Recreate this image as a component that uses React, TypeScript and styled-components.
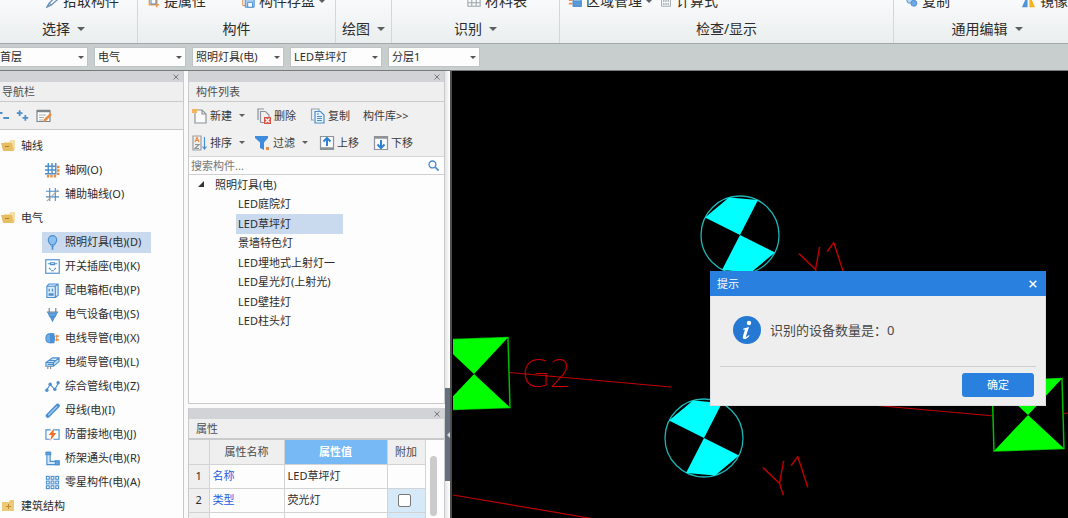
import React from "react";
import styled, { createGlobalStyle, css } from "styled-components";

const GlobalStyle = createGlobalStyle`
  * { box-sizing: border-box; }
  body {
    margin: 0;
    font-family: "Noto Sans", "Noto Sans CJK SC", sans-serif;
    font-size: 11px;
    line-height: 16px;
    color: #2c2c2c;
    background: #c8cccd;
  }
  button, select, input { font: inherit; color: inherit; }
  button { border: 0; padding: 0; background: none; cursor: pointer; }
  ul { list-style: none; margin: 0; padding: 0; }
  h2 { margin: 0; font: inherit; }
  svg { display: block; flex: none; }
`;

const Page = styled.div`
  display: flex;
  flex-direction: column;
  height: 100vh;
  overflow: hidden;
`;

/* ---------- ribbon ---------- */

const Ribbon = styled.header`
  display: flex;
  height: 43px;
  margin-left: -10px;
  flex: none;
  overflow: hidden;
  background: linear-gradient(#f9fafb, #eaeeee);
`;

const RibbonGroup = styled.section<{ $width: number }>`
  display: flex;
  flex-direction: column;
  justify-content: flex-end;
  flex: none;
  width: ${(p) => p.$width}px;
  padding-bottom: 4px;
  font-size: 14px;
  line-height: 20px;
  white-space: nowrap;
  border-right: 1px solid #d3d7d8;
`;

const ToolRow = styled.div<{ $inset: number; $gap?: number }>`
  display: flex;
  gap: ${(p) => p.$gap ?? 0}px;
  padding-left: ${(p) => p.$inset}px;
  margin-bottom: 8px;
`;

const RibbonTool = styled.button`
  display: flex;
  align-items: center;
  gap: 4px;
  height: 20px;
`;

const GroupLabel = styled.div`
  display: flex;
  align-items: center;
  justify-content: center;
  gap: 7px;
`;

const Caret = styled.span<{ $small?: boolean }>`
  flex: none;
  width: 0;
  height: 0;
  border: solid transparent;
  border-width: ${(p) => (p.$small ? "3px 3px 0" : "4px 4px 0")};
  border-top-color: #5c5f61;
`;

/* ---------- context bar ---------- */

const ContextBar = styled.div`
  display: flex;
  align-items: center;
  gap: 6px;
  height: 28px;
  margin-left: -4px;
  flex: none;
  background: #c8cdce;
  border-top: 1px solid #a3a9a9;
  border-bottom: 1px solid #77797b;
`;

const Picker = styled.label`
  position: relative;
  width: 92px;
  height: 20px;

  &::after {
    content: "";
    position: absolute;
    right: 4px;
    top: 9px;
    border: solid transparent;
    border-width: 3px 3px 0;
    border-top-color: #555;
    pointer-events: none;
  }
`;

const PickerSelect = styled.select`
  appearance: none;
  display: block;
  width: 100%;
  height: 100%;
  padding: 0 0 0 3px;
  border: 1px solid #bfc3c5;
  border-radius: 0;
  background: #fdfdfd;
`;

/* ---------- dock panels ---------- */

const Workspace = styled.div`
  display: flex;
  flex: 1;
  min-height: 0;
  background: #fafafa;
`;

const Dock = styled.aside<{ $width: number; $gutter?: number }>`
  display: flex;
  flex-direction: column;
  flex: none;
  width: ${(p) => p.$width}px;
  margin-right: ${(p) => p.$gutter ?? 0}px;
`;

const DockGap = styled.div`
  flex: none;
  height: 4px;
`;

const Panel = styled.section<{ $fill?: boolean; $edge?: boolean }>`
  display: flex;
  flex-direction: column;
  min-height: 0;
  flex: ${(p) => (p.$fill ? "1" : "0 0 110px")};
  background: #fdfdfd;
  border: solid #c9cacc;
  border-width: ${(p) => (p.$edge ? "0 1px 0 0" : p.$fill ? "0 1px 1px" : "0 1px")};
`;

const PanelGrip = styled.div`
  display: flex;
  justify-content: flex-end;
  align-items: center;
  height: 11px;
  padding-right: 4px;
  flex: none;
  background: #d2d3d7;
`;

const GripClose = styled.button`
  color: #77797d;
`;

const PanelTitle = styled.h2<{ $inset: number }>`
  flex: none;
  height: 20px;
  padding-left: ${(p) => p.$inset}px;
  line-height: 19px;
  color: #4d4d4d;
  background: #efeff0;
  border-bottom: 1px solid #c9cacc;
`;

const NavTools = styled.div`
  display: flex;
  align-items: center;
  gap: 7px;
  height: 28px;
  flex: none;
  padding-right: 4px;
  background: #f0f0f0;
  border-bottom: 1px solid #c9cacc;

  button:first-child { margin-left: -4px; }
`;

const NavTree = styled.ul`
  padding-top: 4px;
`;

const NavGroup = styled.li`
  display: flex;
  align-items: center;
  gap: 5px;
  height: 24px;
  padding-left: 1px;
`;

const NavItem = styled.li`
  display: flex;
  align-items: center;
  height: 24px;
  padding-left: 42px;
`;

const NavButton = styled.button<{ $active?: boolean }>`
  display: flex;
  align-items: center;
  gap: 5px;
  height: 21px;
  padding: 0 10px 0 3px;
  white-space: nowrap;
  background: ${(p) => (p.$active ? "#c9d9ee" : "transparent")};
`;

/* ---------- component list ---------- */

const ListTools = styled.div`
  flex: none;
  background: #f0f0f0;
  border-bottom: 1px solid #d5d6d8;
`;

const ListToolRow = styled.div`
  display: flex;
  align-items: center;
  height: 27px;
  padding-left: 3px;
`;

const ListTool = styled.button<{ $width: number }>`
  display: flex;
  align-items: center;
  gap: 2px;
  width: ${(p) => p.$width}px;
  white-space: nowrap;
  color: #3a3a3a;

  ${Caret} { margin-left: 5px; }
`;

const SearchBox = styled.label`
  display: flex;
  align-items: center;
  flex: none;
  height: 18px;
  padding: 0 5px 0 2px;
  border-bottom: 1px solid #cfd0d2;
`;

const SearchInput = styled.input`
  flex: 1;
  min-width: 0;
  height: 16px;
  padding: 0;
  border: 0;
  outline: 0;
  background: transparent;

  &::placeholder { color: #777; opacity: 1; }
`;

const ComponentTree = styled.ul`
  display: grid;
  grid-auto-rows: 1fr;
  min-height: 156px;
`;

const treeRow = css`
  display: flex;
  align-items: center;
  white-space: nowrap;
`;

const TreeRoot = styled.li`
  ${treeRow}
  gap: 10px;
  padding-left: 9px;
`;

const TreeItem = styled.li<{ $active?: boolean }>`
  ${treeRow}
  width: 107px;
  margin-left: 47px;
  padding-left: 2px;
  background: ${(p) => (p.$active ? "#c9d9ee" : "transparent")};
`;

/* ---------- properties ---------- */

const PropertyArea = styled.div`
  display: flex;
  flex: 1;
  min-height: 0;
  overflow: hidden;
  border-top: 1px solid #c9cacc;
`;

const PropertyTable = styled.table`
  width: 236px;
  flex: none;
  table-layout: fixed;
  border-collapse: collapse;
`;

const HeadCell = styled.th<{ $active?: boolean }>`
  height: 24px;
  padding: 0;
  font-weight: ${(p) => (p.$active ? 700 : 400)};
  color: ${(p) => (p.$active ? "#fff" : "#4a4a4a")};
  background: ${(p) => (p.$active ? "#76b9f5" : "#efeff0")};
  border: solid #d2d3d5;
  border-width: 0 1px 1px 0;
`;

const Cell = styled.td<{ $kind?: "index" | "name" | "flag" }>`
  height: 24px;
  padding: 0 0 0 3px;
  border: solid #d2d3d5;
  border-width: 0 1px 1px 0;
  ${(p) => p.$kind === "index" && css`padding: 0; text-align: center; background: #efeff0;`}
  ${(p) => p.$kind === "name" && css`color: #1f5be0;`}
  ${(p) => p.$kind === "flag" && css`padding: 0 3px 0 0; background: #d6e9f9;`}
`;

const Tick = styled.input`
  appearance: none;
  display: block;
  width: 13px;
  height: 13px;
  margin: 0 auto;
  border: 1px solid #777;
  border-radius: 2px;
  background: #fff;
`;

const ScrollTrack = styled.div`
  flex: 1;
  padding: 16px 0 0 4px;
`;

const ScrollThumb = styled.div`
  width: 7px;
  height: 60px;
  border-radius: 4px;
  background: #cbcbcd;
`;

const Splitter = styled.div`
  flex: none;
  width: 5px;
  padding-top: 317px;
  background: linear-gradient(90deg, #e4e4e6, #fff);
`;

const SplitterHandle = styled.button`
  display: flex;
  align-items: center;
  justify-content: flex-end;
  width: 5px;
  height: 93px;
  background: #64707c;

  &::after {
    content: "";
    border: solid transparent;
    border-width: 3px 3px 3px 0;
    border-right-color: #d8dde2;
  }
`;

/* ---------- drawing + dialog ---------- */

const DrawingArea = styled.main`
  position: relative;
  flex: 1;
  min-width: 0;
  padding-left: 1px;
  overflow: hidden;
  background: #000;
  border-left: 2px solid #4c4e50;
`;

const Dialog = styled.section`
  position: absolute;
  top: 200px;
  right: 22px;
  width: 336px;
  background: #efeeef;
  border: 1px solid #dcdde0;
  border-top: 0;
`;

const DialogHead = styled.div`
  display: flex;
  align-items: center;
  justify-content: space-between;
  height: 25px;
  margin: 0 -1px;
  padding: 0 9px 0 7px;
  color: #fff;
  background: #2a80de;
`;

const DialogBody = styled.div`
  display: flex;
  align-items: center;
  gap: 9px;
  height: 71px;
  margin: 0 9px;
  padding: 0 0 3px 13px;
  font-size: 13px;
  color: #484848;
  border-bottom: 1px solid #cfcfcf;
`;

const DialogFoot = styled.div`
  display: flex;
  justify-content: flex-end;
  padding: 6px 11px 8px;
`;

const ConfirmButton = styled.button`
  width: 72px;
  height: 24px;
  border-radius: 3px;
  color: #fff;
  background: #2a80de;
`;

/* ---------- icons ---------- */

const BLUE = "#4b8fcf";
const ORANGE = "#ee8b3e";

const Icon = ({ children, size = 16 }: { children: React.ReactNode; size?: number }) => (
  <svg width={size} height={size} viewBox="0 0 16 16" fill="none" stroke={BLUE} strokeWidth="1.2" aria-hidden="true">
    {children}
  </svg>
);

const Cross = ({ size = 6, weight = 1 }: { size?: number; weight?: number }) => (
  <svg width={size} height={size} viewBox="0 0 8 8" stroke="currentColor" strokeWidth={weight * (8 / size)}>
    <path d="M.7.7l6.600 6.600M7.300.7L.7 7.300" />
  </svg>
);

const FolderIcon = ({ closed }: { closed?: boolean }) => (
  <svg width="15" height="14" viewBox="0 0 15 14" aria-hidden="true">
    {closed ? (
      <>
        <path d="M1 3h7l1-2h4v11H1z" fill="#ecc877" />
        <path d="M5 7.5h5M7.5 5v5" stroke="#b98e35" />
      </>
    ) : (
      <>
        <path d="M3 3h5l1-2h5v9l-1 2H4z" fill="#f4dfa9" />
        <path d="M0 4h11l2 8H2z" fill="#e6bd62" />
        <path d="M4 7.5h4" stroke="#a98032" />
      </>
    )}
  </svg>
);

const navIcons: Record<string, React.ReactNode> = {
  grid: (
    <>
      <path d="M3.500 0v12M7.500 0v12M11.500 0v12M0 3.500h12M0 7.500h12M0 11.500h12" strokeWidth="1.500" />
      <path d="M14 3v10M2 14h11" stroke={ORANGE} strokeWidth="2.800" strokeDasharray="2.500 1.200" />
    </>
  ),
  aux: (
    <>
      <path d="M5 1v14M11 1v14M1 4.500h14M1 10.500h14" />
      <path d="M2 15L14 3" stroke="#b4a494" />
    </>
  ),
  bulb: (
    <>
      <path d="M6 10.500C5.500 9 3.500 8 3.500 5.200a4.500 4.500 0 019 0C12.500 8 10.500 9 10 10.500z" fill="#8dc0ee" />
      <path d="M6.500 12.500h3M7 15h2M8 11v4" />
    </>
  ),
  socket: (
    <>
      <rect x=".8" y=".8" width="14.4" height="14.4" />
      <path d="M3 5h3M10 5h3M6 4h4v2H6zM4.500 9.500l1.500 2M11.500 9.500l-1.500 2M6.500 12.500h3" />
    </>
  ),
  box: (
    <>
      <path d="M2 3.500h9v12H2zM2 3.500L4 1h10v12l-3 2.500M11 3.500L14 1" fill="#d9eafa" />
      <path d="M4.500 6v3M8 6v3M4.500 11.500h4v1.500h-4z" strokeWidth="1.4" />
    </>
  ),
  plug: (
    <>
      <path d="M4.500 1v4M11.500 1v4M2 5.500h12" stroke="#6e7f8e" />
      <path d="M3.500 6.500h9L11 10H5zM6 11h4l-2 4z" fill="#64a6e6" />
    </>
  ),
  conduit: (
    <>
      <rect x="1" y="3" width="9" height="9.5" rx="4" fill="#6dabea" />
      <path d="M6 3h3.500v9.500H6z" fill="#4a90dc" />
      <path d="M11 5.500h4M11 9.500h4M12.500 4v7" stroke={ORANGE} />
    </>
  ),
  cable: (
    <>
      <path d="M1 8l7-5h7v4l-6 5H1zM1 8h8l6-5M9 8v4M4 6h8M3 10h6" fill="#c5def5" />
      <path d="M3 12v3M6 12v3" stroke="#9b8a78" />
    </>
  ),
  polyline: (
    <>
      <path d="M1.500 12l4-6 5 5 4-7" />
      <g fill={BLUE} stroke="none">
        <circle cx="2" cy="12" r="1.8" />
        <circle cx="5.5" cy="5.5" r="1.8" />
        <circle cx="10.5" cy="11" r="1.8" />
        <circle cx="14" cy="4" r="1.8" />
      </g>
    </>
  ),
  bus: (
    <>
      <path d="M3 13.500L13.500 3" strokeWidth="4.5" strokeLinecap="round" />
      <path d="M3.500 13L13 3.500" stroke="#9ccaf2" strokeWidth="1.5" />
    </>
  ),
  bolt: (
    <>
      <path d="M6 3H1v10h4M10 3h5v10H9" />
      <path d="M10 1L4 8.500h3L5.500 15l6.500-8.500H9z" fill="#f0702a" stroke="none" />
    </>
  ),
  elbow: (
    <>
      <path d="M2 1.500h3.500V11H15v3.500H2z" fill="#d4e7f9" />
      <path d="M1 1.500h5V4H1zM11 10.500h4v4h-4z" fill="#62a4e4" />
    </>
  ),
  blocks: (
    <>
      {[1.5, 6.5, 11.5].map((y) => [1.5, 6.5, 11.5].map((x) => <rect key={`${x}-${y}`} x={x} y={y} width="3" height="3" />))}
    </>
  ),
};

const NewIcon = () => (
  <Icon>
    <path d="M4 2h6l4 4v9H3V5" fill="#fafafa" stroke="#8d9398" />
    <path d="M10 2v4h4" stroke="#8d9398" />
    <path d="M0 1h5v4H0z" fill="#f6b25d" stroke="none" />
  </Icon>
);
const DeleteIcon = () => (
  <Icon>
    <path d="M2 12V1h6M4.500 14.500v-11h5l3.500 3.500v3M4.500 14.500H8" stroke="#8d9398" />
    <rect x="8" y="9" width="7" height="7" fill="#dd5146" stroke="none" />
    <path d="M9.500 10.500l4 4M13.500 10.500l-4 4" stroke="#fff" />
  </Icon>
);
const CopyIcon = () => (
  <Icon>
    <path d="M4 12H1.500V1H9v2" stroke="#8fa4b5" />
    <path d="M5 3.500h5.500L14 7v8H5z" fill="#e6f1fb" />
    <path d="M7 8.500h5M7 10.500h5M7 12.500h5M7 6h2" />
  </Icon>
);
const SortIcon = () => (
  <Icon>
    <path d="M1 1h8v14H1z" stroke="#9a9fa3" />
    <path d="M3 7l2-4.500L7 7M3.500 5.500h3" stroke={ORANGE} />
    <path d="M3 9.500h4l-4 4h4" stroke="#8f9599" />
    <path d="M12.500 2v12M10.500 11.500l2 2.500 2-2.500" />
  </Icon>
);
const FilterIcon = () => (
  <Icon>
    <path d="M0 1h13v2L9 7.500V15l-4-2V7.500L0 3z" fill="#3f8bdc" stroke="none" />
    <path d="M11 12h3v3h-3z" fill={ORANGE} stroke="none" />
  </Icon>
);
const MoveIcon = ({ down }: { down?: boolean }) => (
  <Icon>
    <path d="M1.500 1.500h13v13h-13z" fill="#fafafa" stroke="#8d9398" />
    <path d={down ? "M1 2.500h14" : "M1 13.500h14"} stroke="#8d9398" strokeWidth="2.5" />
    <path d={down ? "M8 5v8M4.500 9.500L8 13l3.500-3.500" : "M8 11V3M4.500 6.500L8 3l3.500 3.500"} stroke="#2f7fd4" strokeWidth="2" />
  </Icon>
);

/* ---------- data ---------- */

const navGroups: { name: string; closed?: boolean; items: [string, string][] }[] = [
  { name: "轴线", items: [["轴网(O)", "grid"], ["辅助轴线(O)", "aux"]] },
  {
    name: "电气",
    items: [
      ["照明灯具(电)(D)", "bulb"],
      ["开关插座(电)(K)", "socket"],
      ["配电箱柜(电)(P)", "box"],
      ["电气设备(电)(S)", "plug"],
      ["电线导管(电)(X)", "conduit"],
      ["电缆导管(电)(L)", "cable"],
      ["综合管线(电)(Z)", "polyline"],
      ["母线(电)(I)", "bus"],
      ["防雷接地(电)(J)", "bolt"],
      ["桥架通头(电)(R)", "elbow"],
      ["零星构件(电)(A)", "blocks"],
    ],
  },
  { name: "建筑结构", closed: true, items: [] },
];

const components = ["LED庭院灯", "LED草坪灯", "景墙特色灯", "LED埋地式上射灯一", "LED星光灯(上射光)", "LED壁挂灯", "LED柱头灯"];

const pickers: [string, string][] = [
  ["楼层", "首层"],
  ["专业", "电气"],
  ["构件类型", "照明灯具(电)"],
  ["构件", "LED草坪灯"],
  ["分层", "分层1"],
];

/* ---------- drawing symbols ---------- */

const RoundLamp = ({ x, y }: { x: number; y: number }) => (
  <g transform={`translate(${x} ${y})`}>
    <circle r="39" fill="none" stroke="#1fb5b5" strokeWidth="1.3" />
    <path d="M0 0L-35-17.500-11-37.500 18-35zM0 0L35 17.500 11 37.500-18 35z" fill="#0ff" />
  </g>
);

const SquareLamp = ({ x, y }: { x: number; y: number }) => (
  <g transform={`translate(${x} ${y})`}>
    <path d="M-36-34L34-36.500 36 33.500-34 36z" fill="none" stroke="#0b0" strokeWidth="1.5" />
    <path d="M0 0L-36-34 34-36.500zM0 0L36 33.500-34 36z" fill="#0f0" />
  </g>
);

const CadText = styled.text`
  font-family: "Noto Sans", "Roboto", sans-serif;
  font-weight: 100;
  fill: #d00000;
`;

const Drawing = () => (
  <svg width="615" height="447" viewBox="453 71 615 447" role="img" aria-label="电气平面图">
    <path d="M509 372.500L671 387M860 404L994 416M1064 413.500L1068 413M453 495L592 518.500" stroke="#c00000" strokeWidth="1.2" />
    <SquareLamp x={474} y={374} />
    <SquareLamp x={1028} y={415} />
    <RoundLamp x={740} y={235} />
    <RoundLamp x={704} y={438} />
    <CadText x="522" y="387" fontSize="38">G2</CadText>
    <CadText fontSize="46" transform="translate(808 285) rotate(-18)">Y1</CadText>
    <CadText fontSize="46" transform="translate(772 499) rotate(-18)">Y1</CadText>
  </svg>
);

/* ---------- page ---------- */

const Grip = ({ label }: { label: string }) => (
  <PanelGrip><GripClose aria-label={label}><Cross /></GripClose></PanelGrip>
);

export default function App() {
  return (
    <Page>
      <GlobalStyle />
      <Ribbon>
        <RibbonGroup $width={148}>
          <ToolRow $inset={56}>
            <RibbonTool><Icon size={13}><path d="M1 15l3-5 8-8 3 3-8 7zM4 10l3 3" stroke="#6b8fb5" strokeWidth="1.6" /></Icon>拾取构件</RibbonTool>
          </ToolRow>
          <GroupLabel>选择<Caret /></GroupLabel>
        </RibbonGroup>
        <RibbonGroup $width={198}>
          <ToolRow $inset={9} $gap={36}>
            <RibbonTool><Icon size={13}><path d="M3 1v11h12M1 4h11v11" stroke="#e59b55" strokeWidth="2" /><path d="M5 5h6v6H5z" /></Icon>提属性</RibbonTool>
            <RibbonTool><Icon size={13}><path d="M1 1v12h3" stroke={ORANGE} /><path d="M4 1h11v14H4z" fill="#a9cdf0" /><path d="M7 9h6v6H7z" fill="#fff" /></Icon>构件存盘<Caret $small /></RibbonTool>
          </ToolRow>
          <GroupLabel>构件</GroupLabel>
        </RibbonGroup>
        <RibbonGroup $width={56}>
          <GroupLabel>绘图<Caret /></GroupLabel>
        </RibbonGroup>
        <RibbonGroup $width={168}>
          <ToolRow $inset={75}>
            <RibbonTool><Icon size={14}><path d="M1 2h14v12H1zM1 6h14M1 10h14M5.500 2v12M10.500 2v12" stroke="#9aa5ad" /></Icon>材料表</RibbonTool>
          </ToolRow>
          <GroupLabel>识别<Caret /></GroupLabel>
        </RibbonGroup>
        <RibbonGroup $width={334}>
          <ToolRow $inset={8} $gap={8}>
            <RibbonTool><Icon size={14}><path d="M1 3h4M1 7h4M1 11h4" stroke={ORANGE} strokeWidth="2" /><path d="M6 2h9v12H6z" fill="#cfe3f6" /><path d="M6 8h9v6H6z" fill="#5b9ad8" /></Icon>区域管理<Caret $small /></RibbonTool>
            <RibbonTool><Icon size={12}><path d="M2 1h12v14H2zM2 5h12" stroke="#9aa5ad" /><path d="M4 8h8M4 12h8" stroke="#9aa5ad" strokeWidth="2" strokeDasharray="2 1" /></Icon>计算式</RibbonTool>
          </ToolRow>
          <GroupLabel>检查/显示</GroupLabel>
        </RibbonGroup>
        <RibbonGroup $width={187}>
          <ToolRow $inset={12} $gap={71}>
            <RibbonTool><Icon size={12}><circle cx="5" cy="7" r="4" fill="#b9d4f0" /><circle cx="10.5" cy="11" r="4" fill="#6fa8e4" /></Icon>复制</RibbonTool>
            <RibbonTool><Icon size={15}><path d="M7 1v13H1z" fill="#4c94dc" stroke="none" /><path d="M9 1v13h6z" fill="#f5b11e" stroke="none" /></Icon>镜像</RibbonTool>
          </ToolRow>
          <GroupLabel>通用编辑<Caret /></GroupLabel>
        </RibbonGroup>
      </Ribbon>

      <ContextBar>
        {pickers.map(([label, value]) => (
          <Picker key={label}>
            <PickerSelect aria-label={label}><option>{value}</option></PickerSelect>
          </Picker>
        ))}
      </ContextBar>

      <Workspace>
        <Dock $width={184} $gutter={4}>
          <Panel $fill $edge>
            <Grip label="关闭导航栏" />
            <PanelTitle $inset={2}>导航栏</PanelTitle>
            <NavTools>
              <button aria-label="全部折叠"><Icon size={13}><path d="M1 5h7M9 11h7" strokeWidth="2.5" /></Icon></button>
              <button aria-label="全部展开"><Icon size={13}><path d="M1 5h7M4.500 1.500v7M8 11h7M11.500 7.500v7" strokeWidth="2.2" /></Icon></button>
              <button aria-label="编辑">
                <Icon>
                  <path d="M1 2.500h13v11H1z" stroke="#7d858b" fill="#fff" />
                  <path d="M1 3h13" stroke="#7d858b" strokeWidth="2.5" />
                  <path d="M3 7h7M3 9.500h5M3 12h4" stroke="#a8adb1" />
                  <path d="M8 13l7-7" stroke={ORANGE} strokeWidth="2.5" />
                </Icon>
              </button>
            </NavTools>
            <NavTree>
              {navGroups.map((group) => (
                <React.Fragment key={group.name}>
                  <NavGroup><FolderIcon closed={group.closed} />{group.name}</NavGroup>
                  {group.items.map(([name, icon]) => (
                    <NavItem key={name}>
                      <NavButton $active={icon === "bulb"}><Icon size={15}>{navIcons[icon]}</Icon>{name}</NavButton>
                    </NavItem>
                  ))}
                </React.Fragment>
              ))}
            </NavTree>
          </Panel>
        </Dock>

        <Dock $width={257}>
          <Panel $fill>
            <Grip label="关闭构件列表" />
            <PanelTitle $inset={7}>构件列表</PanelTitle>
            <ListTools>
              <ListToolRow>
                <ListTool $width={64}><NewIcon />新建<Caret $small /></ListTool>
                <ListTool $width={54}><DeleteIcon />删除</ListTool>
                <ListTool $width={53}><CopyIcon />复制</ListTool>
                <ListTool $width={60}>构件库&gt;&gt;</ListTool>
              </ListToolRow>
              <ListToolRow>
                <ListTool $width={63}><SortIcon />排序<Caret $small /></ListTool>
                <ListTool $width={64}><FilterIcon />过滤<Caret $small /></ListTool>
                <ListTool $width={54}><MoveIcon />上移</ListTool>
                <ListTool $width={54}><MoveIcon down />下移</ListTool>
              </ListToolRow>
            </ListTools>
            <SearchBox>
              <SearchInput type="text" placeholder="搜索构件..." aria-label="搜索构件" />
              <Icon size={11}><circle cx="6.5" cy="6.5" r="5" strokeWidth="2" /><path d="M10.500 10.500l5 5" strokeWidth="2.5" /></Icon>
            </SearchBox>
            <ComponentTree>
              <TreeRoot>
                <svg width="7" height="7" viewBox="0 0 7 7" aria-hidden="true"><path d="M6 0v6H0z" fill="#333" /></svg>
                照明灯具(电)
              </TreeRoot>
              {components.map((name) => <TreeItem key={name} $active={name === "LED草坪灯"}>{name}</TreeItem>)}
            </ComponentTree>
          </Panel>
          <DockGap />
          <Panel>
            <Grip label="关闭属性" />
            <PanelTitle $inset={7}>属性</PanelTitle>
            <PropertyArea>
              <PropertyTable>
                <colgroup><col width="20" /><col width="75" /><col width="103" /><col width="38" /></colgroup>
                <thead>
                  <tr><HeadCell aria-label="序号" /><HeadCell>属性名称</HeadCell><HeadCell $active>属性值</HeadCell><HeadCell>附加</HeadCell></tr>
                </thead>
                <tbody>
                  <tr><Cell $kind="index">1</Cell><Cell $kind="name">名称</Cell><Cell>LED草坪灯</Cell><Cell /></tr>
                  <tr><Cell $kind="index">2</Cell><Cell $kind="name">类型</Cell><Cell>荧光灯</Cell><Cell $kind="flag"><Tick type="checkbox" aria-label="附加类型" /></Cell></tr>
                  <tr><Cell $kind="index" /><Cell /><Cell /><Cell $kind="flag"><Tick type="checkbox" aria-label="附加" /></Cell></tr>
                </tbody>
              </PropertyTable>
              <ScrollTrack><ScrollThumb /></ScrollTrack>
            </PropertyArea>
          </Panel>
        </Dock>

        <Splitter><SplitterHandle aria-label="收起面板" /></Splitter>

        <DrawingArea>
          <Drawing />
          <Dialog role="dialog" aria-label="提示">
            <DialogHead>提示<button aria-label="关闭"><Cross size={8} weight={1.5} /></button></DialogHead>
            <DialogBody>
              <svg width="28" height="28" viewBox="0 0 28 28" aria-hidden="true">
                <circle cx="14" cy="14" r="14" fill="#2579d2" />
                <circle cx="16" cy="7" r="2.2" fill="#fff" />
                <path d="M10.500 12.500l5.500-1.500-3 9c-.2 1.200.8 1 3-1l.5.700c-2 2.500-3.500 3.300-5 3.300-1.700 0-2-1.300-1.500-3l2-6.500-2 .2z" fill="#fff" />
              </svg>
              识别的设备数量是：0
            </DialogBody>
            <DialogFoot><ConfirmButton>确定</ConfirmButton></DialogFoot>
          </Dialog>
        </DrawingArea>
      </Workspace>
    </Page>
  );
}
